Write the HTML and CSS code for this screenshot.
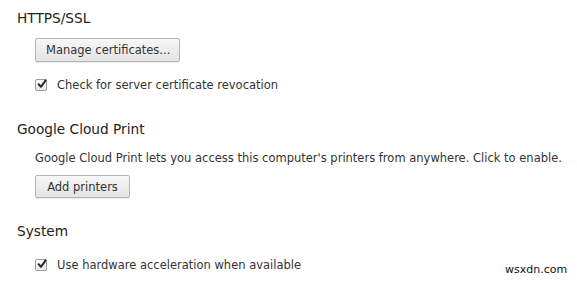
FILE: index.html
```html
<!DOCTYPE html>
<html>
<head>
<meta charset="utf-8">
<link rel="stylesheet" href="styles.css">
</head>
<body>
<div class="page">
  <section class="section">
    <h3 class="heading">HTTPS/SSL</h3>
    <div class="body">
      <button class="btn btn-certs">Manage certificates...</button>
      <label class="check check-revoke"><span class="box"><svg viewBox="0 0 12 12" width="12" height="12"><path d="M2.6 6.2 L5 8.8 L9.6 2.4" fill="none" stroke="#2a2a2a" stroke-width="2" stroke-linecap="round" stroke-linejoin="round"/></svg></span>Check for server certificate revocation</label>
    </div>
  </section>
  <section class="section section-print">
    <h3 class="heading">Google Cloud Print</h3>
    <div class="body">
      <p class="desc">Google Cloud Print lets you access this computer's printers from anywhere. Click to enable.</p>
      <button class="btn btn-print">Add printers</button>
    </div>
  </section>
  <section class="section section-system">
    <h3 class="heading">System</h3>
    <div class="body">
      <label class="check check-hw"><span class="box"><svg viewBox="0 0 12 12" width="12" height="12"><path d="M2.6 6.2 L5 8.8 L9.6 2.4" fill="none" stroke="#2a2a2a" stroke-width="2" stroke-linecap="round" stroke-linejoin="round"/></svg></span>Use hardware acceleration when available</label>
    </div>
  </section>
</div>
<div class="watermark">wsxdn.com</div>
</body>
</html>
```
FILE: styles.css
```css
html, body { margin: 0; padding: 0; background: #fff; }
body {
  width: 577px; height: 285px; overflow: hidden; position: relative;
  font-family: "DejaVu Sans", "Noto Sans", sans-serif;
  color: #333;
}
.page { padding: 9px 0 0 17px; }
.heading {
  margin: 0; font-size: 13.7px; font-weight: normal; color: #222; line-height: 18px;
}
.body { padding-left: 18px; }
.btn {
  display: block; white-space: nowrap;
  font-family: inherit; font-size: 11.5px; color: #333;
  height: 24px; padding: 0 10px;
  border: 1px solid #b4b4b4; border-radius: 2px;
  background: linear-gradient(#f7f7f7, #e4e4e4);
  box-shadow: 0 1px 1px rgba(0,0,0,0.08);
}
.btn-certs { margin-top: 11px; width: 145px; }
.btn-print { margin-top: 9px; width: 95px; height: 23px; }
.check {
  display: flex; align-items: center; font-size: 11.5px; color: #333;
  height: 15px; white-space: nowrap;
}
.check-revoke { margin-top: 15px; }
.check-hw { margin-top: 17px; }
.box {
  width: 12px; height: 12px; box-sizing: border-box; flex: none;
  border: 1px solid #9c9c9c; border-radius: 2px;
  background: linear-gradient(#fff, #e8e8e8);
  margin-right: 10px; position: relative;
}
.box svg { position: absolute; left: 0; top: -2px; }
.section-print { margin-top: 28px; }
.section-system { margin-top: 24px; }
.desc { margin: 13px 0 0 0; font-size: 11.5px; line-height: 15px; color: #333; white-space: nowrap; }
.watermark {
  position: absolute; left: 505px; top: 263px;
  font-family: "DejaVu Sans", sans-serif; font-size: 11px; color: #111;
}
```
